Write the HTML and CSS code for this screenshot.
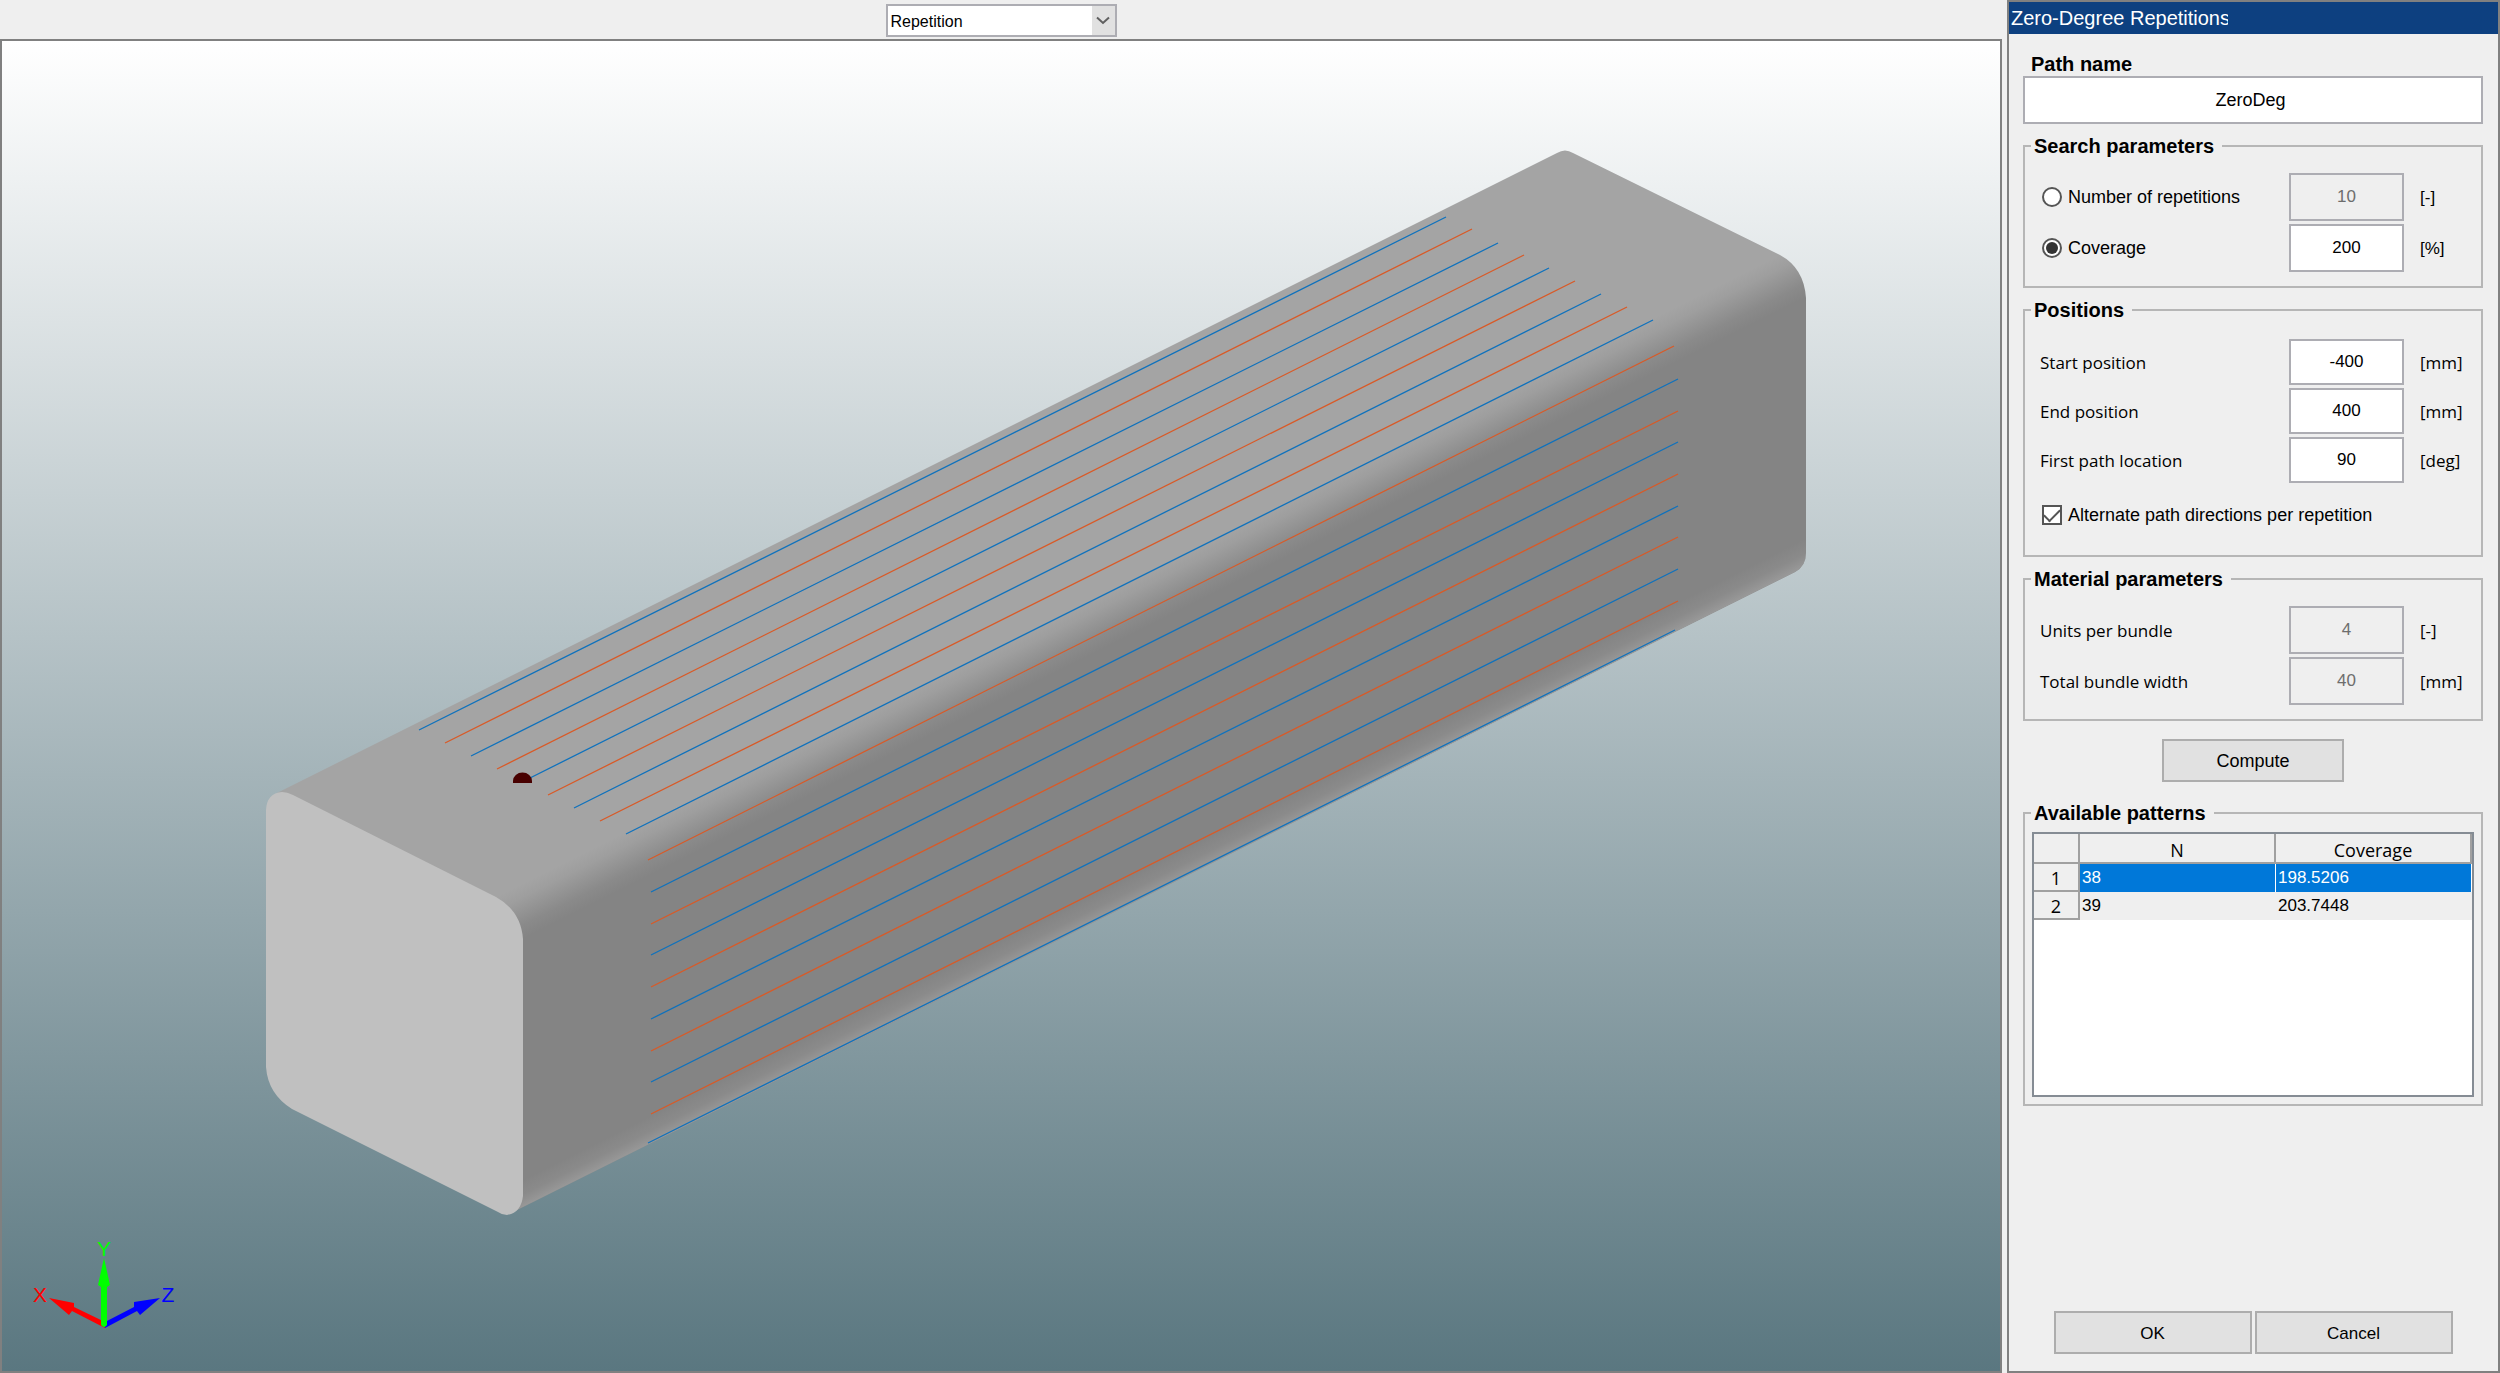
FILE: index.html
```html
<!DOCTYPE html>
<html lang="en">
<head>
<meta charset="utf-8">
<title>Zero-Degree Repetitions</title>
<link rel="stylesheet" href="styles.css">
</head>
<body>
<main class="workspace">
  <div class="toolbar">
    <div class="dropdown">
      <select class="dropdown-select" aria-label="Display mode"><option>Repetition</option></select>
      <span class="dropdown-button"><svg width="14" height="9" viewBox="0 0 14 9"><path d="M1 1.5 7 7 13 1.5" fill="none" stroke="#606060" stroke-width="2"/></svg></span>
    </div>
  </div>
  <div class="viewport">
    <svg class="scene" viewBox="2 41 1998 1330" role="img" aria-label="Mandrel with repeated paths">
      <defs>
        <linearGradient id="body" gradientUnits="userSpaceOnUse" x1="496" y1="897" x2="518" y2="941">
          <stop offset="0" stop-color="#a4a4a4"/><stop offset=".25" stop-color="#9e9e9e"/><stop offset=".75" stop-color="#8a8a8a"/><stop offset="1" stop-color="#848484"/>
        </linearGradient>
        <linearGradient id="lower" gradientUnits="userSpaceOnUse" x1="522" y1="1180" x2="534" y2="1204">
          <stop offset="0" stop-color="#999" stop-opacity="0"/><stop offset=".5" stop-color="#999" stop-opacity=".3"/><stop offset="1" stop-color="#9b9b9b"/>
        </linearGradient>
      </defs>
      <path fill="url(#body)" d="M277 793 1557 153Q1565 148 1573 153L1780 255Q1804 268 1806 298V553Q1806 566 1795 572L515 1211 400 1000Z"/>
      <path fill="url(#lower)" d="M522 1180 1806 538V553Q1806 566 1795 572L515 1211Z"/>
      <path fill="#c0c0c0" d="M266 810Q267 793 282 792 287 792 293 795L496 897Q521 911 523 939V1196Q521 1213 507 1215 502 1215 498 1212L292 1109Q268 1094 266 1067Z"/>
      <g class="path-forward">
        <path d="M419 730 1446 217M471 756 1498 243M522 782 1549 268M574 808 1601 294M626 834 1653 320M651 892 1678 379M651 955 1678 442M651 1019 1678 506M651 1082 1678 569M648 1143 1675 630"/>
      </g>
      <g class="path-backward">
        <path d="M445 743 1472 229M497 769 1524 255M548 795 1575 281M600 821 1627 307M648 860 1674 346M651 924 1678 411M651 987 1678 474M651 1051 1678 537M651 1114 1678 601"/>
      </g>
      <path fill="#480000" d="M513 783V781A9 8 0 0 1 532 781V783Z"/>
      <g>
        <path fill="#f00" d="M49 1298 74 1303V1307L105 1322V1328L72 1311 69 1315Z"/>
        <path fill="#00f" d="M160 1298 134 1302V1307L105 1322V1328L137 1311 140 1315Z"/>
        <path fill="#0f0" d="M104 1258 110 1285 107 1287V1325Q104 1329 101 1325V1287L98 1285Z"/>
        <text class="axis" x="40" y="1302" fill="#f00">X</text>
        <text class="axis" x="104" y="1256" fill="#0f0">Y</text>
        <text class="axis" x="168" y="1302" fill="#00f">Z</text>
      </g>
    </svg>
  </div>
</main>
<aside class="panel">
  <h1 class="panel-title"><span class="panel-title-text">Zero-Degree Repetitions</span></h1>
  <form class="panel-form">
    <label class="name-label" for="path-name">Path name</label>
    <input class="field name-field" id="path-name" type="text" value="ZeroDeg">

    <fieldset class="group">
      <legend class="legend">Search parameters</legend>
      <div class="rows">
        <div class="row">
          <label class="choice"><input class="radio" type="radio" name="mode">Number of repetitions</label>
          <input class="field" type="text" value="10" aria-label="Number of repetitions" disabled>
          <span class="unit unit-plain">[-]</span>
        </div>
        <div class="row">
          <label class="choice"><input class="radio" type="radio" name="mode" checked>Coverage</label>
          <input class="field" type="text" value="200" aria-label="Coverage">
          <span class="unit unit-plain">[%]</span>
        </div>
      </div>
    </fieldset>

    <fieldset class="group">
      <legend class="legend">Positions</legend>
      <div class="rows rows-compact">
        <div class="row">
          <label class="row-label" for="start">Start position</label>
          <input class="field" id="start" type="text" value="-400">
          <span class="unit">[mm]</span>
        </div>
        <div class="row">
          <label class="row-label" for="end">End position</label>
          <input class="field" id="end" type="text" value="400">
          <span class="unit">[mm]</span>
        </div>
        <div class="row">
          <label class="row-label" for="first">First path location</label>
          <input class="field" id="first" type="text" value="90">
          <span class="unit">[deg]</span>
        </div>
        <label class="choice choice-alternate"><input class="checkbox" type="checkbox" checked>Alternate path directions per repetition</label>
      </div>
    </fieldset>

    <fieldset class="group">
      <legend class="legend">Material parameters</legend>
      <div class="rows">
        <div class="row">
          <label class="row-label" for="units">Units per bundle</label>
          <input class="field" id="units" type="text" value="4" disabled>
          <span class="unit">[-]</span>
        </div>
        <div class="row">
          <label class="row-label" for="width">Total bundle width</label>
          <input class="field" id="width" type="text" value="40" disabled>
          <span class="unit">[mm]</span>
        </div>
      </div>
    </fieldset>

    <button class="button button-compute" type="button">Compute</button>

    <fieldset class="group group-patterns">
      <legend class="legend">Available patterns</legend>
      <div class="table-frame">
        <table class="patterns">
          <thead><tr><th class="index"></th><th>N</th><th>Coverage</th></tr></thead>
          <tbody>
            <tr class="selected"><th class="index">1</th><td>38</td><td>198.5206</td></tr>
            <tr><th class="index">2</th><td>39</td><td>203.7448</td></tr>
          </tbody>
        </table>
      </div>
    </fieldset>

    <div class="actions">
      <button class="button button-action" type="button">OK</button>
      <button class="button button-action" type="button">Cancel</button>
    </div>
  </form>
</aside>
</body>
</html>
```
FILE: styles.css
```css
* { box-sizing: border-box; }

body {
  margin: 0;
  min-height: 100vh;
  display: flex;
  gap: 5px;
  background: #efefef;
  color: #000;
  font: 18px/24px "Liberation Sans", Arial, sans-serif;
}

/* 3D view */
.workspace {
  flex: 1;
  min-width: 0;
  display: flex;
  flex-direction: column;
}

.toolbar {
  display: flex;
  justify-content: center;
  padding: 4px 0 2px;
}

.dropdown {
  position: relative;
  width: 231px;
  height: 33px;
}

.dropdown-select {
  appearance: none;
  width: 100%;
  height: 100%;
  padding: 3px 28px 0 3px;
  border: 2px solid #adadb3;
  border-radius: 0;
  background: #fff;
  color: #000;
  font: 16px/24px "Liberation Sans", Arial, sans-serif;
}

.dropdown-button {
  position: absolute;
  top: 2px;
  right: 2px;
  bottom: 2px;
  width: 23px;
  display: grid;
  place-items: center;
  background: #e1e1e1;
  pointer-events: none;
}

.viewport {
  flex: 1;
  min-height: 0;
  display: flex;
  border: 2px solid #808080;
  background: linear-gradient(#fff, #5a7780);
}

.scene {
  width: 100%;
  height: auto;
}

.path-forward,
.path-backward {
  fill: none;
  stroke-width: 1.3;
}

.path-forward { stroke: #0f72bd; }
.path-backward { stroke: #d95a27; }

.axis {
  font: 21px "Liberation Sans", Arial, sans-serif;
  text-anchor: middle;
}

/* Settings panel */
.panel {
  flex: 0 0 493px;
  display: flex;
  flex-direction: column;
  border: 2px solid #808080;
}

.panel-title {
  margin: 0;
  height: 32px;
  padding-left: 2px;
  background: #0d4080;
  color: #fff;
  font-size: 20px;
  font-weight: normal;
  line-height: 32px;
}

.panel-title-text {
  display: block;
  width: 217px;
  overflow: hidden;
  white-space: nowrap;
}

.panel-form {
  flex: 1;
  display: flex;
  flex-direction: column;
  padding: 18px 15px 17px 14px;
}

.name-label,
.legend {
  font-size: 20px;
  font-weight: bold;
  line-height: 24px;
}

.name-label { padding-left: 8px; }

.field {
  width: 100%;
  height: 100%;
  padding: 0;
  border: 2px solid #adadb3;
  border-radius: 0;
  background: #fff;
  color: #000;
  font: 17px "Liberation Sans", Arial, sans-serif;
  text-align: center;
}

.field:disabled {
  background: #efefef;
  color: #6d6d6d;
}

.name-field {
  height: 48px;
  padding: 0 5px 0 0;
  font-size: 18px;
}

.group {
  min-width: 0;
  margin: 10px 0 0;
  padding: 0;
  border: 2px solid #b6b6b6;
}

.legend {
  margin-left: 6px;
  padding: 0 8px 0 3px;
}

.rows {
  display: grid;
  grid-auto-rows: 48px;
  gap: 3px;
  padding: 15px 0 14px 15px;
}

.rows-compact {
  grid-auto-rows: 46px;
  padding: 17px 0 24px 15px;
}

.row {
  display: grid;
  grid-template-columns: 1fr 115px 77px;
  align-items: center;
}

.row-label,
.unit {
  padding-top: 2px;
  font: 17px/24px "Open Sans", "Noto Sans", sans-serif;
}

.unit { padding-left: 16px; }

.unit-plain { font-family: "Liberation Sans", Arial, sans-serif; }

.choice {
  display: flex;
  align-items: center;
  gap: 6px;
}

.choice-alternate {
  height: 66px;
  padding-bottom: 8px;
}

.radio,
.checkbox {
  appearance: none;
  flex: none;
  display: grid;
  place-items: center;
  width: 20px;
  height: 20px;
  margin: 0 0 0 2px;
  border: 2px solid #555;
  background: #fff;
}

.radio { border-radius: 50%; }

.radio:checked::before {
  content: "";
  width: 12px;
  height: 12px;
  border-radius: 50%;
  background: #333;
}

.checkbox:checked::before {
  content: "";
  width: 14px;
  height: 7px;
  margin-bottom: 4px;
  border: solid #555;
  border-width: 0 0 2px 2px;
  transform: rotate(-45deg);
}

.button {
  height: 43px;
  padding: 2px 0 0;
  border: 2px solid #adadad;
  border-radius: 0;
  background: #e1e1e1;
  color: #000;
  font: 18px "Liberation Sans", Arial, sans-serif;
}

.button-compute {
  align-self: center;
  width: 182px;
  margin-top: 18px;
}

.rows-compact { padding-bottom: 23px; }

.group-patterns { margin-top: 19px; }

.table-frame {
  height: 265px;
  margin: 7px;
  border: 2px solid #858c94;
  background: #fff;
}

.patterns {
  width: 100%;
  border-collapse: separate;
  border-spacing: 0;
  table-layout: fixed;
}

.patterns th {
  padding: 5px 0 0;
  border: solid #a0a0a0;
  border-width: 0 2px 2px 0;
  background: #efefef;
  font: 18px/23px "Open Sans", "Noto Sans", sans-serif;
}

.patterns .index { width: 46px; }

.patterns tbody th {
  padding: 3px 0 0;
}

.patterns td {
  padding: 0 2px;
  background: #efefef;
  font-size: 17px;
}

.patterns .selected td {
  border-right: 1px solid #fff;
  background: #0078d9;
  color: #fff;
}

.actions {
  display: flex;
  justify-content: center;
  gap: 3px;
  margin-top: auto;
}

.button-action {
  width: 198px;
  font-size: 17px;
}
```
